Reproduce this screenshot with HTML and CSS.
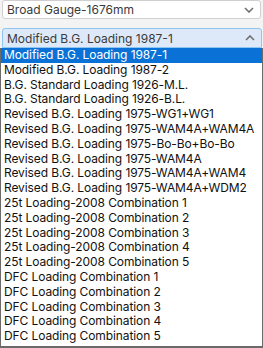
FILE: index.html
```html
<!DOCTYPE html>
<html lang="en">
<head>
  <meta charset="utf-8">
  <title>Loading select</title>
  <link rel="stylesheet" href="styles.css">
</head>
<body>
  <div class="page">
    <div class="select">
      <span class="select__value">Broad Gauge-1676mm</span>
      <svg class="select__arrow" viewBox="0 0 10 6" width="10" height="6">
        <path d="M1 1l4 4 4-4" fill="none" stroke="#707070" stroke-width="1.6"/>
      </svg>
    </div>

    <div class="select select_open">
      <span class="select__value">Modified B.G. Loading 1987-1</span>
      <svg class="select__arrow" viewBox="0 0 10 6" width="10" height="6">
        <path d="M1 5l4-4 4 4" fill="none" stroke="#707070" stroke-width="1.6"/>
      </svg>
    </div>

    <ul class="options">
      <li class="options__item options__item_active">Modified B.G. Loading 1987-1</li>
      <li class="options__item">Modified B.G. Loading 1987-2</li>
      <li class="options__item">B.G. Standard Loading 1926-M.L.</li>
      <li class="options__item">B.G. Standard Loading 1926-B.L.</li>
      <li class="options__item">Revised B.G. Loading 1975-WG1+WG1</li>
      <li class="options__item">Revised B.G. Loading 1975-WAM4A+WAM4A</li>
      <li class="options__item">Revised B.G. Loading 1975-Bo-Bo+Bo-Bo</li>
      <li class="options__item">Revised B.G. Loading 1975-WAM4A</li>
      <li class="options__item">Revised B.G. Loading 1975-WAM4A+WAM4</li>
      <li class="options__item">Revised B.G. Loading 1975-WAM4A+WDM2</li>
      <li class="options__item">25t Loading-2008 Combination 1</li>
      <li class="options__item">25t Loading-2008 Combination 2</li>
      <li class="options__item">25t Loading-2008 Combination 3</li>
      <li class="options__item">25t Loading-2008 Combination 4</li>
      <li class="options__item">25t Loading-2008 Combination 5</li>
      <li class="options__item">DFC Loading Combination 1</li>
      <li class="options__item">DFC Loading Combination 2</li>
      <li class="options__item">DFC Loading Combination 3</li>
      <li class="options__item">DFC Loading Combination 4</li>
      <li class="options__item">DFC Loading Combination 5</li>
    </ul>
  </div>
</body>
</html>
```

FILE: styles.css
```css
*,
*::before,
*::after {
  box-sizing: border-box;
  margin: 0;
  padding: 0;
}

body {
  background-color: #f3f3f3;
  color: #1f1f1f;
  font-family: "Inter", "Noto Sans", sans-serif;
  font-size: 12px;
}

.page {
  display: flex;
  flex-direction: column;
  width: 263px;
  height: 348px;
}

.select {
  display: flex;
  justify-content: space-between;
  align-items: center;
  height: 19px;
  margin: 0 2px;
  padding: 0 6px 0 4px;
  border: 1px solid #cfcfcf;
  border-radius: 3px;
  background-color: #ffffff;
  color: #3a3a3a;
}

.select_open {
  height: 20px;
  margin-top: 9px;
  margin-right: 1px;
  border-color: #8fc6f0;
  border-radius: 3px 3px 0 0;
  background-color: #dde9f8;
}

.select__arrow {
  flex-shrink: 0;
}

.options {
  flex: 1;
  list-style: none;
  border: 1px solid #6a6a6a;
  border-top: none;
  border-bottom-width: 2px;
  background-color: #ffffff;
  color: #111111;
}

.options__item {
  height: 14.8px;
  padding-left: 3px;
  line-height: 14.8px;
  white-space: nowrap;
  overflow: hidden;
  letter-spacing: -0.1px;
}

.options__item_active {
  background-color: #0a72d6;
  color: #ffffff;
}
```
